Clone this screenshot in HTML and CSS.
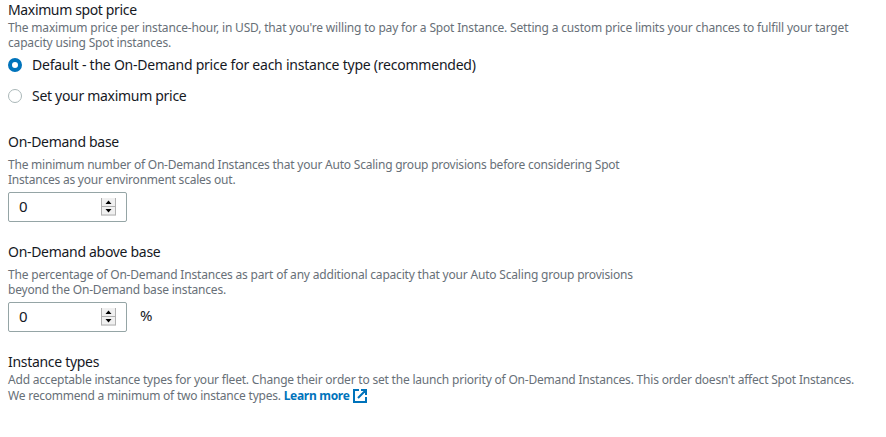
FILE: index.html
```html
<!DOCTYPE html>
<html lang="en">
<head>
<meta charset="utf-8">
<title>Spot settings</title>
<link rel="stylesheet" href="styles.css">
</head>
<body>
<main class="form">
  <section class="field price">
    <h2>Maximum spot price</h2>
    <p class="wide">The maximum price per instance-hour, in USD, that you're willing to pay for a Spot Instance. Setting a custom price limits your chances to fulfill your target<br>capacity using Spot instances.</p>
    <div class="options">
      <label class="option"><span class="radio checked"></span><span class="long">Default - the On-Demand price for each instance type (recommended)</span></label>
      <label class="option"><span class="radio"></span><span>Set your maximum price</span></label>
    </div>
  </section>
  <section class="field base">
    <h2>On-Demand base</h2>
    <p>The minimum number of On-Demand Instances that your Auto Scaling group provisions before considering Spot<br>Instances as your environment scales out.</p>
    <div class="row"><div class="number"><span class="value">0</span><svg class="spin" viewBox="0 0 15 18"><path class="btn" d="M0 0h15v18H0z"/><path class="edge" d="M.5 0v17M14.500 0v17M0 8.500h15M0 17h15"/><path d="M7.500 2.500L10.500 6h-6zM4.500 11h6l-3 3.500z"/></svg></div></div>
  </section>
  <section class="field above">
    <h2>On-Demand above base</h2>
    <p>The percentage of On-Demand Instances as part of any additional capacity that your Auto Scaling group provisions<br>beyond the On-Demand base instances.</p>
    <div class="row"><div class="number"><span class="value">0</span><svg class="spin" viewBox="0 0 15 18"><path class="btn" d="M0 0h15v18H0z"/><path class="edge" d="M.5 0v17M14.500 0v17M0 8.500h15M0 17h15"/><path d="M7.500 2.500L10.500 6h-6zM4.500 11h6l-3 3.500z"/></svg></div><span class="unit">%</span></div>
  </section>
  <section class="field types">
    <h2>Instance types</h2>
    <p>Add acceptable instance types for your fleet. Change their order to set the launch priority of On-Demand Instances. This order doesn't affect Spot Instances.<br><span class="advice">We recommend a minimum of two instance types. </span><a>Learn more <svg class="ext" viewBox="0 0 14 14"><path d="M6 1H1v12h12V8M8 1h5v5M13 1L5 9"/></svg></a></p>
  </section>
</main>
</body>
</html>
```
FILE: styles.css
```css
body{margin:0;background:#fff;font-family:"Noto Sans","Open Sans",sans-serif;color:#16191f}
.form{padding:0 8px}
h2{margin:0;font-size:14px;line-height:20px;font-weight:400;letter-spacing:-.36px}
.base h2,.above h2,.types h2{letter-spacing:-.3px}
p{margin:0;font-size:12px;line-height:15px;color:#687078;white-space:nowrap;letter-spacing:-.2px}
.wide{letter-spacing:-.17px}
.options{margin-top:-1px}
.option{display:flex;align-items:center;height:31px;font-size:14px;gap:10px;letter-spacing:-.3px}
.long{letter-spacing:-.23px}
.radio{box-sizing:border-box;width:14px;height:14px;border:1px solid #aab7b8;border-radius:50%}
.checked{border:4px solid #0073bb}
.base{margin-top:21px}
.base p,.above p{margin-top:5px;letter-spacing:-.22px}
.above p{letter-spacing:-.19px}
.row{display:flex;align-items:center;margin-top:5px}
.number{box-sizing:border-box;display:flex;align-items:center;justify-content:space-between;width:119px;height:30px;padding:0 10px;border:1px solid #95a5a6;border-radius:2px;font-size:15px}
.value{line-height:18px;padding-bottom:2px}
.spin{width:15px;height:18px;margin-bottom:1px}
.spin .btn{fill:#f0f0f0}
.spin .edge{fill:none;stroke:#b0b0b0}
.unit{margin:-5px 0 0 13px;font-size:15px}
.above,.types{margin-top:20px}
.types p{line-height:16px}
.advice{letter-spacing:-.22px}
a{color:#0073bb;font-weight:700;letter-spacing:-.3px}
.ext{width:14px;height:14px;margin-left:1px;vertical-align:-3px;fill:none;stroke:currentColor;stroke-width:2}
```
